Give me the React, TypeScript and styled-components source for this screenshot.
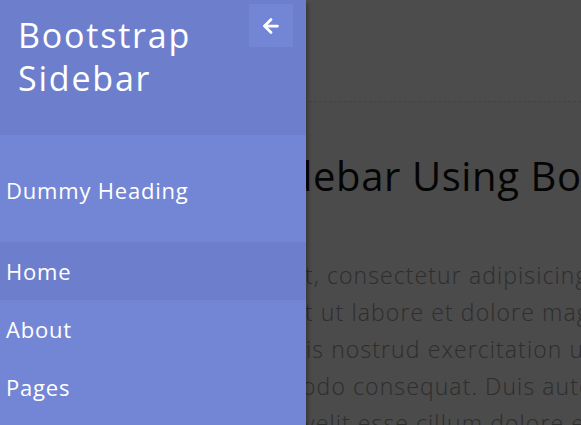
import React from "react";
import styled, { createGlobalStyle } from "styled-components";
import { ArrowLeft } from "lucide-react";

const GlobalStyle = createGlobalStyle`
  html, body { margin: 0; padding: 0; }
  body {
    background: #fafafa;
    font-family: "Open Sans", "Liberation Sans", sans-serif;
    overflow: hidden;
  }
`;

const Page = styled.div`
  width: 581px;
  height: 425px;
  overflow: hidden;
  position: relative;
  background: #fafafa;
`;

const Navbar = styled.div`
  height: 101px;
  background: #fff;
  border-bottom: 1px dashed #ddd;
`;

const Content = styled.div`
  padding: 48px 0 0 0;
  display: flex;
  flex-direction: column;
`;

const Heading = styled.h2`
  margin: 0 0 55px 0;
  font-weight: 400;
  font-size: 40px;
  letter-spacing: 0.6px;
  line-height: 52px;
  color: #111;
  display: flex;
  white-space: nowrap;
`;

const Para = styled.div`
  display: flex;
  flex-direction: column;
  font-size: 23px;
  letter-spacing: 1.1px;
  line-height: 37px;
  font-weight: 300;
  color: #999;
`;

const Line = styled.div`
  display: flex;
  white-space: nowrap;
`;

const Lead = styled.span<{ $w: number }>`
  width: ${(p) => p.$w}px;
  flex-shrink: 0;
  display: flex;
  justify-content: flex-end;
  overflow: hidden;
`;

const Overlay = styled.div`
  position: absolute;
  inset: 0;
  background: rgba(0, 0, 0, 0.7);
`;

const Sidebar = styled.nav`
  position: absolute;
  left: 0;
  top: 0;
  bottom: 0;
  width: 306px;
  background: #7386d5;
  color: #fff;
  box-shadow: 3px 3px 3px rgba(0, 0, 0, 0.2);
  display: flex;
  flex-direction: column;
`;

const SidebarHeader = styled.div`
  height: 135px;
  box-sizing: border-box;
  background: #6d7fcc;
  padding: 14px 0 0 18px;
  display: flex;
  justify-content: space-between;
  align-items: flex-start;
`;

const Title = styled.h3`
  margin: 0;
  font-size: 34px;
  letter-spacing: 1.8px;
  line-height: 43px;
  font-weight: 500;
`;

const CloseButton = styled.button`
  width: 44px;
  height: 43px;
  margin: -10px 13px 0 0;
  border: none;
  background: #7386d5;
  color: #fff;
  display: flex;
  align-items: center;
  justify-content: center;
  padding: 0;
`;

const Menu = styled.ul`
  list-style: none;
  margin: 0;
  padding: 0;
  display: flex;
  flex-direction: column;
`;

const MenuHeading = styled.p`
  margin: 0;
  height: 107px;
  box-sizing: border-box;
  padding: 3px 0 0 6px;
  display: flex;
  align-items: center;
  font-size: 22px;
  letter-spacing: 0.8px;
`;

const MenuItem = styled.li<{ $active?: boolean }>`
  height: 58px;
  display: flex;
  align-items: center;
  padding-left: 6px;
  font-size: 22px;
  letter-spacing: 0.8px;
  background: ${(p) => (p.$active ? "#6d7fcc" : "transparent")};
`;

const lines: [string, string, number][] = [
  ["Lorem ipsum dolor si", "t, consectetur adipisicing elit, sed do", 305],
  ["sed do eiusmod tempor incididun", "t ut labore et dolore magna aliqua.", 305],
  ["Ut enim ad minim veniam, qu", "is nostrud exercitation ullamco laboris", 306],
  ["nisi ut aliquip ex ea comm", "odo consequat. Duis aute irure dolor", 302],
  ["in reprehenderit in voluptate ", "velit esse cillum dolore eu fugiat", 304],
];

export default function App() {
  return (
    <>
      <GlobalStyle />
      <Page>
        <Navbar />
        <Content>
          <Heading>
            <Lead $w={313}>Collapsible Sid</Lead>
            <span>ebar Using Bootstrap 4</span>
          </Heading>
          <Para>
            {lines.map(([a, b, w]) => (
              <Line key={a}>
                <Lead $w={w}>{a}</Lead>
                <span>{b}</span>
              </Line>
            ))}
          </Para>
        </Content>
        <Overlay />
        <Sidebar>
          <SidebarHeader>
            <Title>
              Bootstrap
              <br />
              Sidebar
            </Title>
            <CloseButton aria-label="Close sidebar">
              <ArrowLeft size={22} strokeWidth={3} />
            </CloseButton>
          </SidebarHeader>
          <Menu>
            <MenuHeading>Dummy Heading</MenuHeading>
            <MenuItem $active>Home</MenuItem>
            <MenuItem>About</MenuItem>
            <MenuItem>Pages</MenuItem>
          </Menu>
        </Sidebar>
      </Page>
    </>
  );
}
